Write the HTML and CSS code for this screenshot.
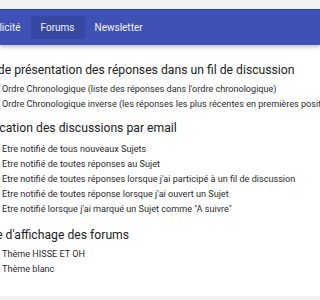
FILE: index.html
```html
<!DOCTYPE html>
<html lang="fr">
<head>
    <meta charset="UTF-8">
    <meta name="viewport" content="width=device-width, initial-scale=1.0">
    <title>Préférences du forum</title>
    <link rel="stylesheet" href="styles.css">
</head>
<body>
    <nav class="topbar">
        <a href="#" class="tab">Publicité</a>
        <a href="#" class="tab active">Forums</a>
        <a href="#" class="tab">Newsletter</a>
    </nav>

    <div class="card">
        <section class="group">
            <h2>Ordre de présentation des réponses dans un fil de discussion</h2>
            <label class="option"><input type="radio" name="ordre" checked> Ordre Chronologique (liste des réponses dans l'ordre chronologique)</label>
            <label class="option"><input type="radio" name="ordre"> Ordre Chronologique inverse (les réponses les plus récentes en premières position)</label>
        </section>

        <section class="group group-mail">
            <h2>Notification des discussions par email</h2>
            <label class="option"><input type="checkbox"> Etre notifié de tous nouveaux Sujets</label>
            <label class="option"><input type="checkbox"> Etre notifié de toutes réponses au Sujet</label>
            <label class="option"><input type="checkbox"> Etre notifié de toutes réponses lorsque j'ai participé à un fil de discussion</label>
            <label class="option"><input type="checkbox"> Etre notifié de toutes réponse lorsque j'ai ouvert un Sujet</label>
            <label class="option"><input type="checkbox"> Etre notifié lorsque j'ai marqué un Sujet comme "A suivre"</label>
        </section>

        <section class="group">
            <h2>Thème d'affichage des forums</h2>
            <label class="option"><input type="radio" name="theme" checked> Thème HISSE ET OH</label>
            <label class="option"><input type="radio" name="theme"> Thème blanc</label>
        </section>
    </div>
</body>
</html>
```

FILE: styles.css
```css
body{
    margin: 0;
    background-color: #f2f2f2;
    font-family: Roboto, "Noto Sans", sans-serif;
    color: #222;
    overflow: hidden;
}

.topbar{
    display: flex;
    align-items: center;
    height: 35px;
    margin-top: 9px;
    background-color: #3f51b5;
    border-top: 1px solid #3446a8;
    box-shadow: 0 2px 4px rgba(0, 0, 0, .25);
    position: relative;
    z-index: 1;
}

.tab{
    display: block;
    padding: 0 10px;
    line-height: 23px;
    font-size: 10px;
    color: #f1f1f8;
    text-decoration: none;
    border-radius: 2px;
}
.tab:first-child{
    margin-left: -28px;
}
.tab.active{
    background-color: #3748a3;
}

.card{
    box-sizing: border-box;
    height: 251px;
    margin-left: -35px;
    padding-top: 17px;
    background-color: #fff;
    box-shadow: 0 1px 3px rgba(0, 0, 0, .25);
    overflow: hidden;
}

.group h2{
    margin: 0 0 4px 0;
    font-size: 12.2px;
    line-height: 16px;
    font-weight: normal;
    color: #212121;
}
.group + .group{
    margin-top: 10px;
}
.group-mail h2{
    margin-top: -2px;
    margin-bottom: 6px;
    padding-left: 5px;
}

.option{
    display: flex;
    align-items: center;
    gap: 4px;
    padding-left: 21px;
    line-height: 15px;
    font-size: 9.1px;
    color: #2a2a2a;
    white-space: nowrap;
}
.option input{
    width: 12px;
    height: 12px;
    margin: 0;
}
```
